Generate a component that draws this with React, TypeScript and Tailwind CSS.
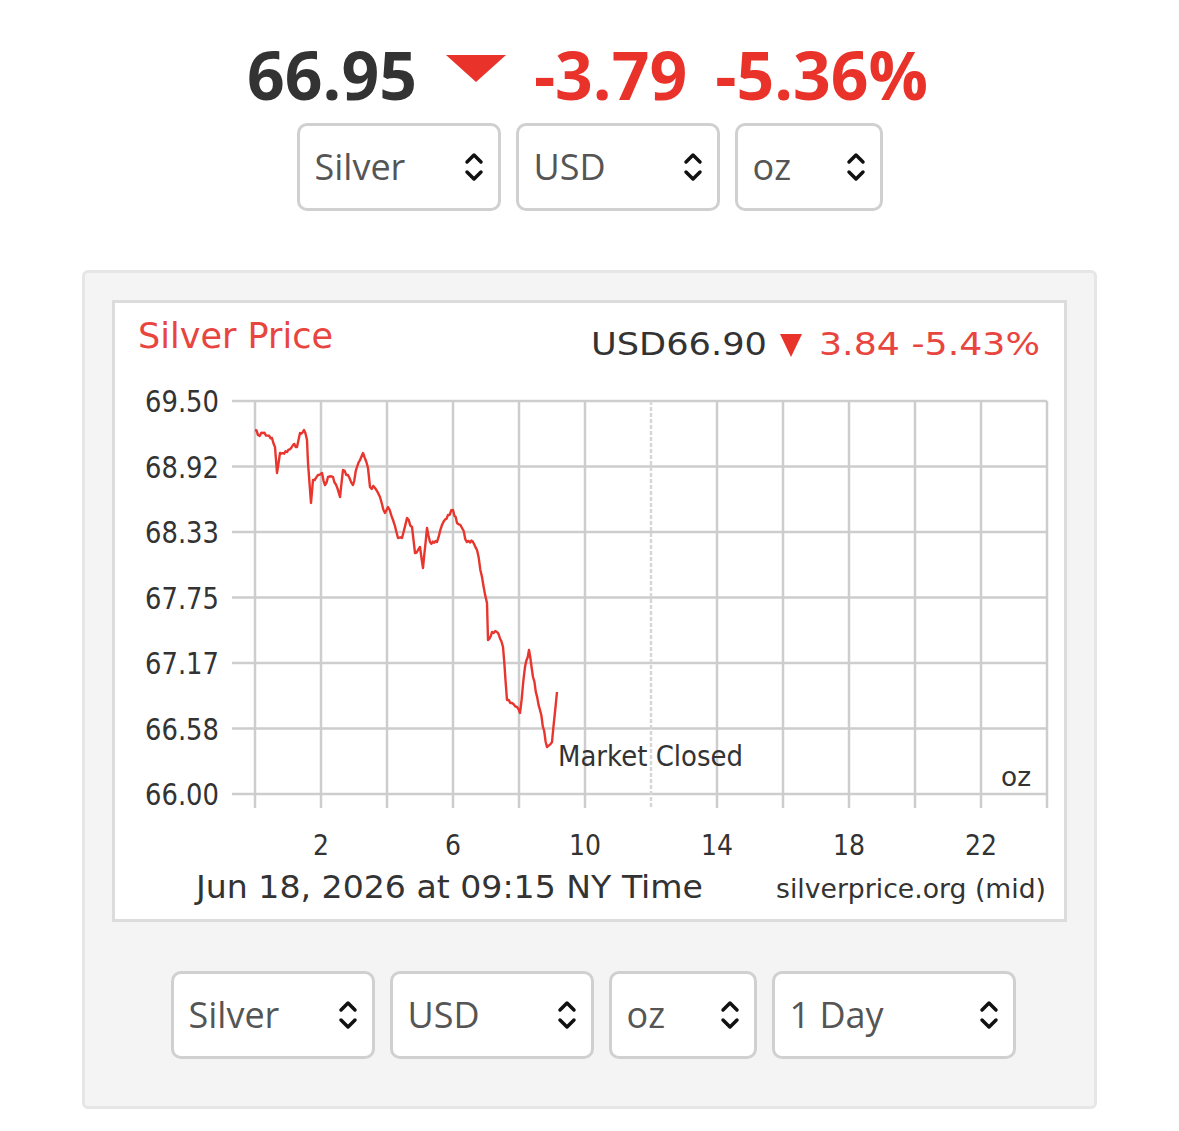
import React from "react";

const red = "#e8322a";

function Chevrons() {
  return (
    <svg width="22" height="34" viewBox="0 0 22 34" fill="none" stroke="#111" strokeWidth="3.5" strokeLinecap="round" strokeLinejoin="round">
      <path d="M4 12 L11 5 L18 12" />
      <path d="M4 22 L11 29 L18 22" />
    </svg>
  );
}

function Select({ label, width }: { label: string; width: string }) {
  return (
    <div className={`${width} h-[88px] flex items-center justify-between rounded-[10px] border-[3px] border-[#d0d0d0] bg-white pl-[15px] pr-[13px]`}>
      <span className="text-[36px] leading-none text-[#555]">{label}</span>
      <Chevrons />
    </div>
  );
}

// traced key points of the day's price (page coords)
const keys: [number, number][] = [
  [255, 430], [258, 435], [263, 433], [272, 438], [275, 447], [277, 473], [280, 453], [287, 452], [293, 445],
  [297, 447], [300, 433], [304, 430], [307, 440], [308, 463], [311, 503], [313, 480], [318, 475], [322, 473],
  [325, 485], [328, 477], [333, 477], [340, 497], [343, 470], [348, 475], [353, 485], [357, 467], [363, 453],
  [368, 468], [370, 487], [375, 488], [380, 497], [385, 513], [388, 507], [393, 520], [398, 538], [402, 538],
  [407, 518], [412, 527], [415, 553], [420, 547], [423, 568], [427, 528], [430, 542], [437, 542], [442, 525],
  [448, 515], [453, 510], [457, 523], [462, 528], [467, 542], [473, 542], [477, 550], [482, 577], [487, 603],
  [488, 640], [492, 632], [497, 632], [503, 647], [507, 700], [512, 703], [517, 707], [520, 713], [525, 667],
  [529, 650], [533, 677], [540, 710], [547, 747], [552, 742], [555, 712], [557, 692],
];

// add small tick-level wiggle between key points
function buildLine() {
  let seed = 7;
  const rnd = () => {
    seed = (seed * 16807) % 2147483647;
    return seed / 2147483647 - 0.5;
  };
  const out: string[] = [];
  for (let i = 0; i < keys.length - 1; i++) {
    const [x1, y1] = keys[i];
    const [x2, y2] = keys[i + 1];
    const steps = Math.max(1, Math.round((x2 - x1) / 1.5));
    for (let s = 0; s < steps; s++) {
      const t = s / steps;
      const jitter = s === 0 ? 0 : rnd() * 4;
      out.push(`${(x1 + (x2 - x1) * t).toFixed(1)},${(y1 + (y2 - y1) * t + jitter).toFixed(1)}`);
    }
  }
  const last = keys[keys.length - 1];
  out.push(`${last[0]},${last[1]}`);
  return out.join(" ");
}

const linePoints = buildLine();

const yRows = [
  ["69.50", 401],
  ["68.92", 466.5],
  ["68.33", 532],
  ["67.75", 597.5],
  ["67.17", 663],
  ["66.58", 728.5],
  ["66.00", 794],
] as const;

const xCols = [255, 321, 387, 453, 519, 585, 651, 717, 783, 849, 915, 981, 1047];
const xLabels = [
  ["2", 321],
  ["6", 453],
  ["10", 585],
  ["14", 717],
  ["18", 849],
  ["22", 981],
] as const;

function Chart() {
  const font = "Tahoma, 'DejaVu Sans', Verdana, sans-serif";
  return (
    <svg width="949" height="616" viewBox="0 0 949 616" className="block">
      <g transform="translate(-115,-303)" fontFamily={font}>
        {/* grid */}
        {yRows.map(([, y]) => (
          <line key={y} x1={232} x2={1047} y1={y} y2={y} stroke="#cdcdcd" strokeWidth="2.5" />
        ))}
        {xCols.map((x) => (
          <line
            key={x}
            x1={x}
            x2={x}
            y1={401}
            y2={808}
            stroke={x === 651 ? "#d6d6d6" : "#cdcdcd"}
            strokeWidth="2.5"
            strokeDasharray={x === 651 ? "4 2" : undefined}
          />
        ))}

        <polyline points={linePoints} fill="none" stroke="#e8362e" strokeWidth="2.4" strokeLinejoin="round" />

        <text x={138} y={348} fontSize="36" fill="#e8453f" textLength={195} lengthAdjust="spacingAndGlyphs">
          Silver Price
        </text>
        <text x={591} y={355} fontSize="32" fill="#333" textLength={176} lengthAdjust="spacingAndGlyphs">
          USD66.90
        </text>
        <polygon points="780,334 802,334 791,357" fill={red} />
        <text x={819} y={355} fontSize="32" fill="#e8453f" textLength={221} lengthAdjust="spacingAndGlyphs">
          3.84 -5.43%
        </text>

        {yRows.map(([t, y]) => (
          <text key={t} x={219} y={y + 11} fontSize="30" fill="#333" textAnchor="end" textLength={74} lengthAdjust="spacingAndGlyphs">
            {t}
          </text>
        ))}
        {xLabels.map(([t, x]) => (
          <text
            key={t}
            x={x}
            y={855}
            fontSize="29"
            fill="#333"
            textAnchor="middle"
            textLength={t.length === 1 ? 16 : 32}
            lengthAdjust="spacingAndGlyphs"
          >
            {t}
          </text>
        ))}

        <text x={558} y={766} fontSize="29" fill="#333" textLength={185} lengthAdjust="spacingAndGlyphs">
          Market Closed
        </text>
        <text x={1001} y={786} fontSize="26" fill="#333" textLength={30} lengthAdjust="spacingAndGlyphs">
          oz
        </text>
        <text x={196} y={898} fontSize="32" fill="#333" textLength={507} lengthAdjust="spacingAndGlyphs">
          Jun 18, 2026 at 09:15 NY Time
        </text>
        <text x={776} y={898} fontSize="27" fill="#333" textLength={270} lengthAdjust="spacingAndGlyphs">
          silverprice.org (mid)
        </text>
      </g>
    </svg>
  );
}

export default function App() {
  return (
    <div className="min-h-screen bg-white flex flex-col items-center pt-[41px] font-['Open_Sans',sans-serif]">
      {/* headline price */}
      <div className="flex items-start h-[66px] text-[66px] leading-[66px] font-bold -ml-[4px]">
        <span className="text-[#333]">66.95</span>
        <svg width="60" height="27" viewBox="0 0 60 27" className="ml-[29px] mt-[14px]">
          <polygon points="0,0 60,0 30,27" fill={red} />
        </svg>
        <span className="ml-[28px] text-[#e8322a]">-3.79</span>
        <span className="ml-[28px] text-[#e8322a]">-5.36%</span>
      </div>

      <div className="mt-[16px] flex gap-[15px]">
        <Select label="Silver" width="w-[204px]" />
        <Select label="USD" width="w-[204px]" />
        <Select label="oz" width="w-[148px]" />
      </div>

      {/* chart panel */}
      <div className="mt-[59px] w-[1015px] rounded-md border-[3px] border-[#e6e6e6] bg-[#f4f4f4] px-[27px] pt-[27px] pb-[47px]">
        <div className="border-[3px] border-[#dcdcdc] bg-white">
          <Chart />
        </div>
        <div className="mt-[49px] flex justify-center gap-[15px] pl-[7px]">
          <Select label="Silver" width="w-[204px]" />
          <Select label="USD" width="w-[204px]" />
          <Select label="oz" width="w-[148px]" />
          <Select label="1 Day" width="w-[244px]" />
        </div>
      </div>
    </div>
  );
}
